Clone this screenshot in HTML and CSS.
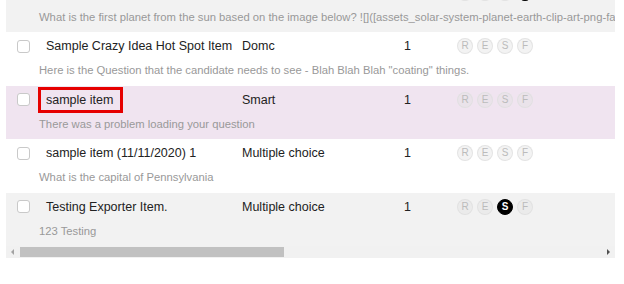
FILE: index.html
```html
<!DOCTYPE html>
<html>
<head>
<meta charset="utf-8">
<link rel="stylesheet" href="styles.css">
</head>
<body>
<div class="list">
  <div class="row grey first">
    <div class="line">
      <span class="check"></span>
      <span class="title">Sample Planet Image Item</span>
      <span class="type">Multiple choice</span>
      <span class="count">1</span>
      <span class="status"><i>R</i><i>E</i><i>S</i><i class="on">F</i></span>
    </div>
    <div class="desc">What is the first planet from the sun based on the image below? ![]([assets_solar-system-planet-earth-clip-art-png-favpng-com.png])</div>
  </div>
  <div class="row">
    <div class="line">
      <span class="check"></span>
      <span class="title">Sample Crazy Idea Hot Spot Item</span>
      <span class="type">Domc</span>
      <span class="count">1</span>
      <span class="status"><i>R</i><i>E</i><i>S</i><i>F</i></span>
    </div>
    <div class="desc">Here is the Question that the candidate needs to see - Blah Blah Blah "coating" things.</div>
  </div>
  <div class="row pink">
    <div class="line">
      <span class="check"></span>
      <span class="title"><span class="marked">sample item</span></span>
      <span class="type">Smart</span>
      <span class="count">1</span>
      <span class="status"><i>R</i><i>E</i><i>S</i><i>F</i></span>
    </div>
    <div class="desc">There was a problem loading your question</div>
  </div>
  <div class="row">
    <div class="line">
      <span class="check"></span>
      <span class="title">sample item (11/11/2020) 1</span>
      <span class="type">Multiple choice</span>
      <span class="count">1</span>
      <span class="status"><i>R</i><i>E</i><i>S</i><i>F</i></span>
    </div>
    <div class="desc">What is the capital of Pennsylvania</div>
  </div>
  <div class="row grey">
    <div class="line">
      <span class="check"></span>
      <span class="title">Testing Exporter Item.</span>
      <span class="type">Multiple choice</span>
      <span class="count">1</span>
      <span class="status"><i>R</i><i>E</i><i class="on">S</i><i>F</i></span>
    </div>
    <div class="desc">123 Testing</div>
  </div>
  <div class="hscroll">
    <span class="arrow left"></span>
    <span class="track"><span class="thumb"></span></span>
    <span class="arrow right"></span>
  </div>
</div>
</body>
</html>
```

FILE: styles.css
```css
html, body {
  margin: 0;
  padding: 0;
  background: #fff;
}
body {
  font-family: "Liberation Sans", Arial, sans-serif;
  overflow: hidden;
  height: 284px;
}
.list {
  margin-left: 6px;
  width: 609px;
  overflow: hidden;
}
.row {
  height: 53.5px;
  background: #fff;
  box-sizing: border-box;
}
.row.first {
  margin-top: -21.5px;
}
.row.grey {
  background: #f2f2f2;
}
.row.pink {
  background: #f0e4f0;
}
.line {
  display: flex;
  align-items: center;
  height: 28px;
  padding-left: 11px;
  white-space: nowrap;
}
.check {
  flex: none;
  width: 13px;
  height: 13px;
  box-sizing: border-box;
  border: 1px solid #c9c9c9;
  border-radius: 3px;
  background: #fff;
}
.title {
  flex: none;
  width: 196px;
  margin-left: 16px;
  font-size: 12.5px;
  color: #222;
}
.marked {
  position: relative;
}
.marked::after {
  content: "";
  position: absolute;
  left: -8px;
  right: -10px;
  top: -6px;
  bottom: -6px;
  border: 3px solid #e60000;
}
.type {
  flex: none;
  width: 162px;
  font-size: 12.5px;
  color: #222;
}
.count {
  flex: none;
  width: 53px;
  font-size: 12.5px;
  color: #222;
}
.status {
  display: flex;
  gap: 4px;
}
.status i {
  font-style: normal;
  width: 16px;
  height: 16px;
  box-sizing: border-box;
  border: 1px solid rgba(222, 222, 222, 0.8);
  border-radius: 50%;
  background: rgba(225, 225, 225, 0.4);
  color: #bbb;
  font-size: 10px;
  line-height: 14px;
  text-align: center;
}
.status i.on {
  background: #000;
  border-color: #000;
  color: #fff;
  font-weight: bold;
}
.desc {
  padding-left: 33px;
  height: 21px;
  line-height: 21px;
  font-size: 11.25px;
  color: #999;
  white-space: nowrap;
  overflow: hidden;
}
.hscroll {
  display: flex;
  align-items: center;
  height: 12px;
  background: #f1f1f1;
}
.arrow {
  flex: none;
  width: 12px;
  height: 12px;
  position: relative;
}
.arrow::before {
  content: "";
  position: absolute;
  top: 3px;
  width: 0;
  height: 0;
  border-top: 3px solid transparent;
  border-bottom: 3px solid transparent;
}
.arrow.left::before {
  left: 5px;
  border-right: 3px solid #a3a3a3;
}
.arrow.right::before {
  left: 4px;
  border-left: 3px solid #505050;
}
.track {
  flex: 1;
  height: 10px;
  padding-left: 2px;
}
.thumb {
  display: block;
  width: 264px;
  height: 10px;
  background: #c1c1c1;
}
```
